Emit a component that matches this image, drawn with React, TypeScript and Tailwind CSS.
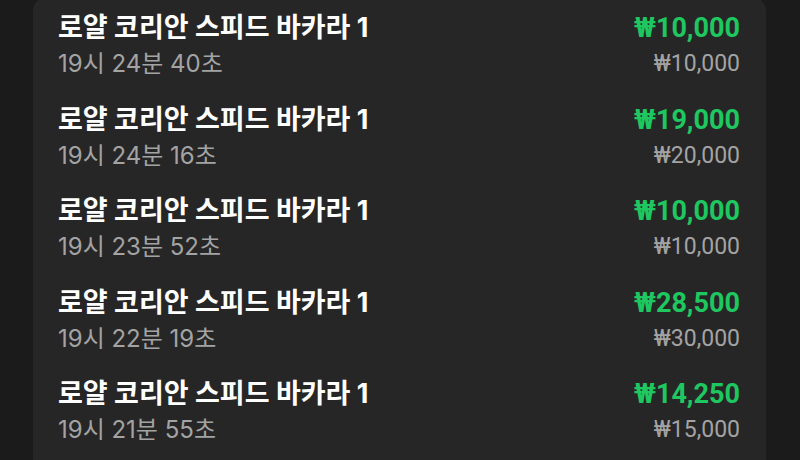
const rows = [
  { time: "19시 24분 40초", win: "₩10,000", bet: "₩10,000" },
  { time: "19시 24분 16초", win: "₩19,000", bet: "₩20,000" },
  { time: "19시 23분 52초", win: "₩10,000", bet: "₩10,000" },
  { time: "19시 22분 19초", win: "₩28,500", bet: "₩30,000" },
  { time: "19시 21분 55초", win: "₩14,250", bet: "₩15,000" },
];

export default function App() {
  return (
    <div
      className="w-[800px] h-[460px] overflow-hidden bg-[#1b1b1b] pl-[33px] pr-[34px]"
      style={{ fontFamily: '"Inter", "Noto Sans CJK KR", sans-serif' }}
    >
      <div className="-mt-[3px] pt-[4px] h-[480px] rounded-t-[14px] bg-[#262626] pl-[25px] pr-[26px]">
        {rows.map((r, i) => (
          <div key={i} className="flex justify-between h-[91.5px] pt-[11px]">
            <div className="flex flex-col gap-[6px]">
              <div className="text-[27px] leading-[32px] font-bold text-white">
                로얄 코리안 스피드 바카라 1
              </div>
              <div className="text-[24px] leading-[28px] text-[#a3a3a3]">{r.time}</div>
            </div>
            <div
              className="flex flex-col items-end gap-[6px]"
              style={{ fontFamily: 'Roboto, "Noto Sans CJK KR", sans-serif' }}
            >
              <div className="text-[27px] leading-[32px] font-bold text-[#1fc761]">{r.win}</div>
              <div className="text-[23px] leading-[28px] text-[#a3a3a3]">{r.bet}</div>
            </div>
          </div>
        ))}
      </div>
    </div>
  );
}
